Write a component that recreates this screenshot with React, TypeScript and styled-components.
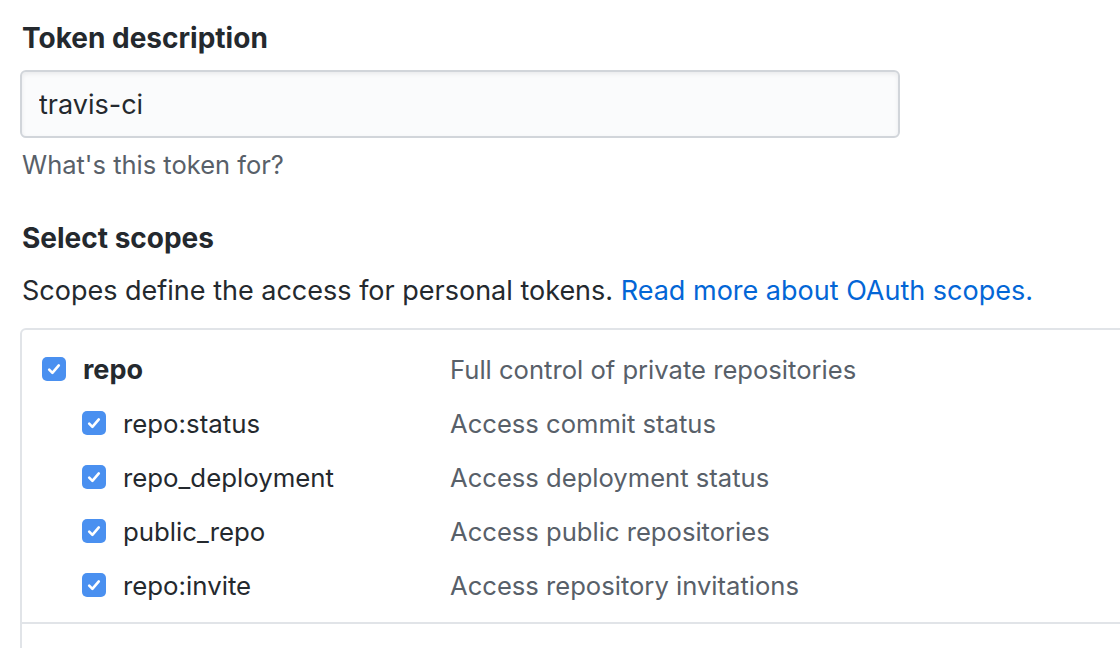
import React from "react";
import styled, { createGlobalStyle } from "styled-components";

const GlobalStyle = createGlobalStyle`
  html, body {
    margin: 0;
    padding: 0;
    background: #fff;
  }
  body {
    font-family: Inter, "Liberation Sans", sans-serif;
    color: #24292e;
    -webkit-font-smoothing: antialiased;
  }
`;

type Scope = {
  name: string;
  description: string;
  child?: boolean;
};

const scopes: Scope[] = [
  { name: "repo", description: "Full control of private repositories" },
  { name: "repo:status", description: "Access commit status", child: true },
  { name: "repo_deployment", description: "Access deployment status", child: true },
  { name: "public_repo", description: "Access public repositories", child: true },
  { name: "repo:invite", description: "Access repository invitations", child: true },
];

const Check: React.FC = () => (
  <CheckBox>
    <svg width="14" height="12" viewBox="0 0 14 12">
      <path
        d="M2.2 6.6 L5.4 9.8 L11.8 2.4"
        fill="none"
        stroke="#fff"
        strokeWidth="2.6"
        strokeLinecap="round"
        strokeLinejoin="round"
      />
    </svg>
  </CheckBox>
);

const App: React.FC = () => {
  return (
    <Page>
      <GlobalStyle />
      <Label>Token description</Label>
      <Input value="travis-ci" readOnly />
      <Note>What's this token for?</Note>

      <SectionTitle>Select scopes</SectionTitle>
      <Lead>
        Scopes define the access for personal tokens.{" "}
        <Link href="#">Read more about OAuth scopes.</Link>
      </Lead>

      <ScopeBox>
        <ScopeGroup>
          {scopes.map((s) => (
            <Row key={s.name}>
              <Name $child={s.child}>
                <Check />
                <NameText $child={s.child}>{s.name}</NameText>
              </Name>
              <Desc>{s.description}</Desc>
            </Row>
          ))}
        </ScopeGroup>
        <ScopeGroup />
      </ScopeBox>
    </Page>
  );
};

export default App;

const Page = styled.div`
  width: 1120px;
  height: 648px;
  overflow: hidden;
  padding-left: 20px;
  padding-top: 20px;
  box-sizing: border-box;
`;

const Label = styled.div`
  font-size: 28px;
  font-weight: 700;
  line-height: 36px;
  padding-left: 2px;
`;

const Input = styled.input`
  display: block;
  margin-top: 14px;
  width: 880px;
  height: 68px;
  box-sizing: border-box;
  border: 2px solid #d1d5da;
  border-radius: 6px;
  background: #fafbfc;
  box-shadow: inset 0 2px 4px rgba(27, 31, 35, 0.075);
  padding: 0 17px;
  font-family: Inter, "Liberation Sans", sans-serif;
  font-size: 27px;
  color: #24292e;
  outline: none;
`;

const Note = styled.div`
  margin-top: 12px;
  font-size: 25.5px;
  line-height: 30px;
  color: #586069;
  padding-left: 2px;
`;

const SectionTitle = styled.div`
  margin-top: 40px;
  font-size: 28px;
  font-weight: 700;
  line-height: 36px;
  padding-left: 2px;
`;

const Lead = styled.div`
  margin-top: 17px;
  font-size: 27px;
  line-height: 36px;
  padding-left: 2px;
`;

const Link = styled.a`
  color: #0366d6;
  text-decoration: none;
`;

const ScopeBox = styled.div`
  margin-top: 19px;
  width: 1200px;
  border: 2px solid #e1e4e8;
  border-radius: 6px;
`;

const ScopeGroup = styled.div`
  padding: 12px 0 10px 20px;
  min-height: 60px;
  & + & {
    border-top: 2px solid #e1e4e8;
  }
`;

const Row = styled.div`
  display: grid;
  grid-template-columns: 408px 1fr;
  align-items: center;
  height: 54px;
`;

const Name = styled.div<{ $child?: boolean }>`
  display: flex;
  align-items: center;
  padding-left: ${(p) => (p.$child ? "40px" : "0")};
`;

const CheckBox = styled.span`
  display: inline-flex;
  align-items: center;
  justify-content: center;
  width: 24px;
  height: 24px;
  border-radius: 5px;
  background: #4a90f0;
  flex-shrink: 0;
`;

const NameText = styled.span<{ $child?: boolean }>`
  margin-left: 17px;
  font-size: ${(p) => (p.$child ? "25.8px" : "27px")};
  font-weight: ${(p) => (p.$child ? 400 : 700)};
  color: #24292e;
`;

const Desc = styled.span`
  font-size: 25.6px;
  color: #586069;
`;
